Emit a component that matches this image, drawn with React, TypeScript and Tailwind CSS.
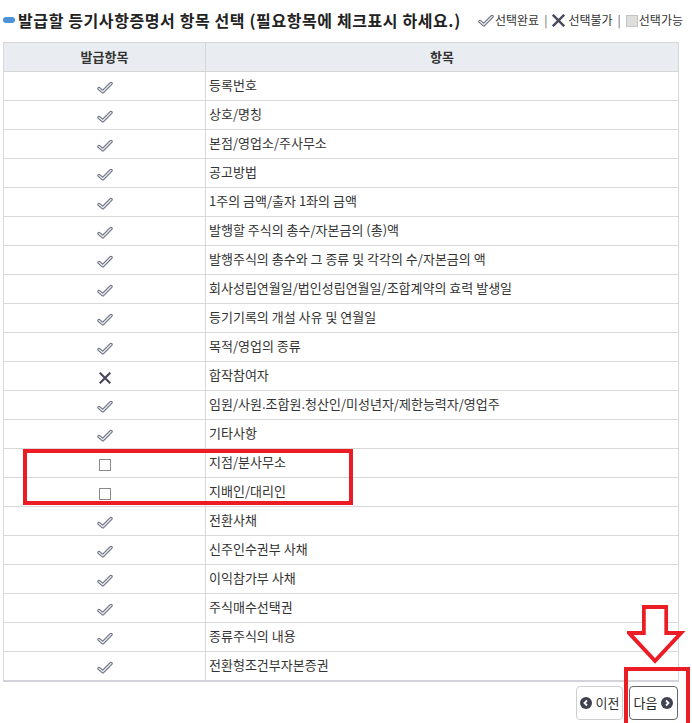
import React from "react"

type Status = "done" | "no" | "open"

const rows: { label: string; status: Status }[] = [
  { label: "등록번호", status: "done" },
  { label: "상호/명칭", status: "done" },
  { label: "본점/영업소/주사무소", status: "done" },
  { label: "공고방법", status: "done" },
  { label: "1주의 금액/출자 1좌의 금액", status: "done" },
  { label: "발행할 주식의 총수/자본금의 (총)액", status: "done" },
  { label: "발행주식의 총수와 그 종류 및 각각의 수/자본금의 액", status: "done" },
  { label: "회사성립연월일/법인성립연월일/조합계약의 효력 발생일", status: "done" },
  { label: "등기기록의 개설 사유 및 연월일", status: "done" },
  { label: "목적/영업의 종류", status: "done" },
  { label: "합작참여자", status: "no" },
  { label: "임원/사원.조합원.청산인/미성년자/제한능력자/영업주", status: "done" },
  { label: "기타사항", status: "done" },
  { label: "지점/분사무소", status: "open" },
  { label: "지배인/대리인", status: "open" },
  { label: "전환사채", status: "done" },
  { label: "신주인수권부 사채", status: "done" },
  { label: "이익참가부 사채", status: "done" },
  { label: "주식매수선택권", status: "done" },
  { label: "종류주식의 내용", status: "done" },
  { label: "전환형조건부자본증권", status: "done" },
]

function Check() {
  return (
    <svg width="16" height="13" viewBox="0 0 16 13">
      <path d="M2 7.5 L5.8 10.8 L14 2.5" fill="none" stroke="#6a6e7e" strokeWidth="3.4" strokeLinecap="round" strokeLinejoin="round" />
      <path d="M2 7.5 L5.8 10.8 L14 2.5" fill="none" stroke="#e6e9f0" strokeWidth="1.4" strokeLinecap="round" strokeLinejoin="round" />
    </svg>
  )
}

function Cross({ size = 12 }: { size?: number }) {
  return (
    <svg width={size} height={size} viewBox="0 0 12 12">
      <path d="M1.5 1.5 L10.5 10.5 M10.5 1.5 L1.5 10.5" stroke="#4a4a5c" strokeWidth="2.2" strokeLinecap="square" />
    </svg>
  )
}

function StatusIcon({ status }: { status: Status }) {
  if (status === "done") return <Check />
  if (status === "no") return <Cross />
  return <span className="block w-[12px] h-[12px] border border-[#8a8a8a] bg-white" />
}

function CircleArrow({ dir }: { dir: "left" | "right" }) {
  return (
    <svg width="12" height="12" viewBox="0 0 12 12">
      <circle cx="6" cy="6" r="6" fill="#3f4050" />
      <path
        d={dir === "left" ? "M7 3.5 L4.5 6 L7 8.5" : "M5 3.5 L7.5 6 L5 8.5"}
        fill="none"
        stroke="#fff"
        strokeWidth="1.8"
      />
    </svg>
  )
}

export default function App() {
  return (
    <div
      className="relative w-[692px] h-[723px] bg-white overflow-hidden text-[#333]"
      style={{ fontFamily: '"Noto Sans CJK KR", "Noto Sans", sans-serif' }}
    >
      {/* title row */}
      <div className="flex items-center h-[40px] pl-[3px] pr-[9px]">
        <span className="block w-[12px] h-[6px] rounded-full bg-[#4b93d6] mr-[3px]" />
        <h2 className="text-[16px] font-bold text-[#222] tracking-[0.6px] leading-none">
          발급할 등기사항증명서 항목 선택 (필요항목에 체크표시 하세요.)
        </h2>
        <div className="ml-auto flex items-center text-[12px] text-[#333] leading-none">
          <Check />
          <span className="ml-[1px]">선택완료</span>
          <span className="mx-[5px] text-[#666]">|</span>
          <Cross size={13} />
          <span className="ml-[3px]">선택불가</span>
          <span className="mx-[5px] text-[#666]">|</span>
          <span className="block w-[12px] h-[12px] bg-[#dedede] border border-[#c4c4c4] mt-[2px]" />
          <span className="ml-[1px]">선택가능</span>
        </div>
      </div>

      {/* table */}
      <div className="ml-[3px] mt-[2px] w-[676px]">
        <table className="w-full border-collapse text-[13px] border-b-2 border-b-[#d3d3da]">
          <thead>
            <tr className="bg-[#e9edf2] h-[29px]">
              <th className="w-[202px] border border-[#d6d6d6] font-bold text-[#333] text-[13px]">발급항목</th>
              <th className="border border-[#d6d6d6] font-bold text-[#333] text-[13px]">항목</th>
            </tr>
          </thead>
          <tbody>
            {rows.map((r) => (
              <tr key={r.label} className="h-[29px]">
                <td className="border border-[#d9d9d9] align-middle">
                  <div className="flex justify-center pt-[3px]">
                    <StatusIcon status={r.status} />
                  </div>
                </td>
                <td className="border border-[#d9d9d9] pl-[3px] pb-[3px] text-[#333] whitespace-nowrap">{r.label}</td>
              </tr>
            ))}
          </tbody>
        </table>
      </div>

      {/* buttons */}
      <div className="flex justify-end gap-[6px] pr-[14px] mt-[4px]">
        <button className="flex items-center justify-center gap-[4px] w-[47px] h-[34px] rounded-[4px] border border-[#cfcfcf] bg-white text-[13px] text-[#333]">
          <CircleArrow dir="left" />
          이전
        </button>
        <button className="flex items-center justify-center gap-[4px] w-[49px] h-[34px] rounded-[4px] border border-[#666] bg-white text-[13px] text-[#222]">
          다음
          <CircleArrow dir="right" />
        </button>
      </div>

      {/* annotations */}
      <div className="absolute left-[23px] top-[449px] w-[330px] h-[56px] border-[4px] border-[#ec1c24]" />
      <div className="absolute left-[624px] top-[667px] w-[66px] h-[60px] border-[4px] border-[#ec1c24]" />
      <svg className="absolute left-[627px] top-[604px]" width="60" height="60" viewBox="0 0 60 60">
        <path
          d="M16 3 H40 V29 H56 L28 57 L0 29 H16 Z"
          transform="translate(2 0) scale(0.93 1)"
          fill="#fff"
          stroke="#ec1c24"
          strokeWidth="4"
          strokeLinejoin="miter"
        />
      </svg>
    </div>
  )
}
